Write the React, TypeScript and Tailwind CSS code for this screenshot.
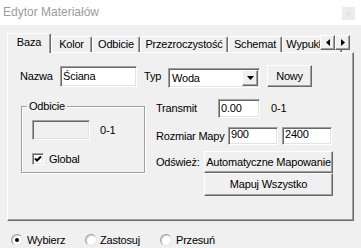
import React from 'react'

const raised =
  'border border-t-white border-l-white border-r-[#696969] border-b-[#696969] shadow-[inset_-1px_-1px_0_#a0a0a0]'
const sunken =
  'border border-t-[#a0a0a0] border-l-[#a0a0a0] border-r-white border-b-white shadow-[inset_1px_1px_0_#696969,inset_-1px_-1px_0_#e3e3e3]'

function Tab({ label, w, active }: { label: string; w: string; active?: boolean }) {
  if (active) {
    return (
      <div
        className={`${w} h-[20px] -mb-px z-10 bg-[#f0f0f0] border-t border-l border-t-white border-l-white border-r border-r-[#696969] shadow-[inset_-1px_0_0_#a0a0a0] rounded-t-[2px] flex justify-center pt-[1px] leading-[14px] shrink-0`}
      >
        {label}
      </div>
    )
  }
  return (
    <div
      className={`${w} h-[16px] bg-[#f0f0f0] border-t border-l border-t-white border-l-white border-r border-r-[#696969] shadow-[inset_-1px_0_0_#a0a0a0] rounded-t-[2px] flex justify-center leading-[14px] shrink-0 whitespace-nowrap overflow-hidden`}
    >
      {label}
    </div>
  )
}

function Arrow({ dir }: { dir: 'l' | 'r' }) {
  return (
    <div className={`w-[15px] h-[15px] bg-[#f0f0f0] ${raised} flex items-center justify-center`}>
      <svg width="4" height="7" viewBox="0 0 4 7">
        {dir === 'l' ? <path d="M4 0 L0 3.5 L4 7 Z" fill="#000" /> : <path d="M0 0 L4 3.5 L0 7 Z" fill="#000" />}
      </svg>
    </div>
  )
}

function Radio({ checked }: { checked?: boolean }) {
  return (
    <div className="w-[12px] h-[12px] rounded-full bg-white border border-t-[#a0a0a0] border-l-[#a0a0a0] border-r-[#e3e3e3] border-b-[#e3e3e3] shadow-[inset_1px_1px_0_#d0d0d0] flex items-center justify-center shrink-0">
      {checked && <div className="w-[4px] h-[4px] rounded-full bg-black" />}
    </div>
  )
}

export default function App() {
  return (
    <div className="w-[361px] h-[248px] overflow-hidden bg-[#f0f0f0] text-black text-[11px] tracking-[-0.2px] font-['Liberation_Sans',Arial,sans-serif]">
      {/* title bar */}
      <div className="h-[25px] bg-white flex items-start justify-between">
        <span className="pt-[5px] pl-[3px] text-[12px] leading-[15px] tracking-normal text-[#9b9b9b]">Edytor Materiałów</span>
        <div className="mt-[7px] mr-[6px] w-[13px] h-[13px] bg-[#ececec] flex items-center justify-center text-[8px] leading-none text-[#d4d4d4]">×</div>
      </div>

      {/* tab control */}
      <div className="ml-[7px] mt-[8px] w-[347px]">
        <div className="relative h-[19px] flex items-end">
          <Tab label="Baza" w="w-[44px]" active />
          <Tab label="Kolor" w="w-[41px]" />
          <Tab label="Odbicie" w="w-[48px]" />
          <Tab label="Przezroczystość" w="w-[88px]" />
          <Tab label="Schemat" w="w-[54px]" />
          <Tab label="Wypukłość" w="w-[60px]" />
          <div className="absolute right-[4px] top-[2px] flex z-20">
            <Arrow dir="l" />
            <Arrow dir="r" />
          </div>
        </div>

        <div className="h-[169px] border border-t-white border-l-white border-r-[#696969] border-b-[#696969] shadow-[inset_-1px_-1px_0_#a0a0a0] flex flex-col pl-[12px] pt-[12px]">
          {/* row 1 */}
          <div className="flex items-center h-[23px]">
            <span className="w-[40px]">Nazwa</span>
            <div className={`w-[77px] h-[21px] bg-white ${sunken} flex items-center pl-[2px]`}>Ściana</div>
            <span className="ml-[7px] w-[24px]">Typ</span>
            <div className={`self-end w-[92px] h-[20px] bg-white ${sunken} flex items-center pl-[3px] pr-[1px]`}>
              <span className="flex-1">Woda</span>
              <div className={`w-[16px] h-[16px] bg-[#f0f0f0] ${raised} flex items-center justify-center`}>
                <svg width="7" height="4" viewBox="0 0 7 4">
                  <path d="M0 0 L7 0 L3.5 4 Z" fill="#000" />
                </svg>
              </div>
            </div>
            <button className={`self-start ml-[7px] w-[45px] h-[22px] bg-[#f0f0f0] ${raised} flex items-center justify-center`}>Nowy</button>
          </div>

          {/* row 2 */}
          <div className="flex mt-[11px] ml-[1px]">
            <div className="relative mt-[7px] w-[124px] h-[67px] border border-[#a0a0a0] shadow-[inset_1px_1px_0_#fff,1px_1px_0_#fff] pl-[10px] pt-[13px]">
              <span className="absolute -top-[7px] left-[5px] px-[2px] bg-[#f0f0f0] leading-[13px]">Odbicie</span>
              <div className="flex items-center">
                <div className={`w-[58px] h-[20px] bg-[#f0f0f0] ${sunken}`} />
                <span className="ml-[10px]">0-1</span>
              </div>
              <div className="flex items-center mt-[11px]">
                <div className={`w-[12px] h-[12px] bg-white ${sunken} flex items-center justify-center`}>
                  <svg width="8" height="8" viewBox="0 0 8 8">
                    <path d="M1 3.5 L3 5.5 L7 1.5" stroke="#000" strokeWidth="2" fill="none" />
                  </svg>
                </div>
                <span className="ml-[5px]">Global</span>
              </div>
            </div>

            <div className="ml-[11px] flex flex-col">
              <div className="flex items-center h-[19px]">
                <span className="w-[62px]">Transmit</span>
                <div className={`w-[42px] h-[19px] bg-white ${sunken} flex items-center pl-[2px]`}>0.00</div>
                <span className="ml-[11px]">0-1</span>
              </div>
              <div className="flex items-center h-[18px] mt-[9px]">
                <span className="w-[72px]">Rozmiar Mapy</span>
                <div className={`w-[50px] h-[18px] bg-white ${sunken} pl-[2px] leading-[12px]`}>900</div>
                <div className={`ml-[4px] w-[50px] h-[18px] bg-white ${sunken} pl-[2px] leading-[12px]`}>2400</div>
              </div>
              <div className="flex mt-[6px]">
                <span className="w-[48px] h-[22px] flex items-center">Odśwież:</span>
                <div className="flex flex-col w-[129px]">
                  <button className={`h-[22px] bg-[#f0f0f0] ${raised} flex items-center justify-center whitespace-nowrap`}>Automatyczne Mapowanie</button>
                  <button className={`h-[23px] bg-[#f0f0f0] ${raised} flex items-center justify-center`}>Mapuj Wszystko</button>
                </div>
              </div>
            </div>
          </div>
        </div>
      </div>

      {/* radio row */}
      <div className="flex items-center h-[14px] mt-[12px] pl-[11px]">
        <div className="w-[74px] flex items-center">
          <Radio checked />
          <span className="ml-[4px]">Wybierz</span>
        </div>
        <div className="w-[75px] flex items-center">
          <Radio />
          <span className="ml-[3px]">Zastosuj</span>
        </div>
        <div className="flex items-center">
          <Radio />
          <span className="ml-[4px]">Przesuń</span>
        </div>
      </div>
    </div>
  )
}
